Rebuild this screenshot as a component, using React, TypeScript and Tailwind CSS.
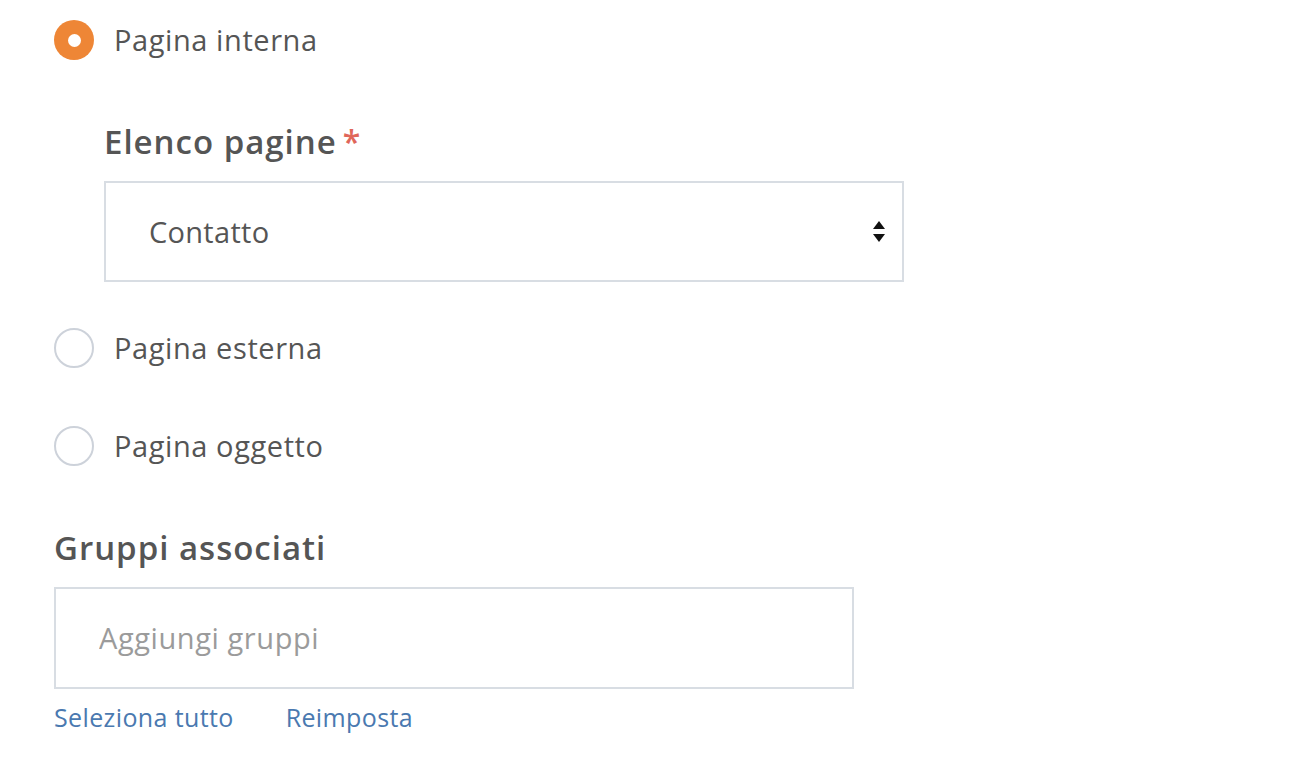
import React, { useState } from "react";

const OPTIONS = ["Pagina interna", "Pagina esterna", "Pagina oggetto"];

function Radio({ checked, label, onClick }: {
    checked: boolean;
    label: string;
    onClick: () => void;
}) {
    return (
        <div className="flex items-center h-[40px] cursor-pointer" onClick={onClick}>
            {checked
                ? <div className="w-[40px] h-[40px] rounded-full bg-[#ee8636] flex items-center justify-center">
                    <div className="w-[13px] h-[13px] rounded-full bg-white" />
                </div>
                : <div className="w-[40px] h-[40px] rounded-full border-2 border-[#cdd2da] bg-white" />
            }
            <span className="ml-[20px] text-[29px] leading-[40px] tracking-[0.02em] text-[#555555]">{label}</span>
        </div>
    )
}

export default function App() {
    const [selected, setSelected] = useState(0);

    return (
        <div className="min-h-screen bg-white pl-[54px] pt-[20px] font-['Open_Sans',sans-serif]">
            <Radio checked={selected === 0} label={OPTIONS[0]} onClick={() => setSelected(0)} />
            {selected === 0 &&
                <div className="pl-[50px] pt-[62px]">
                    <div className="flex items-start text-[33px] font-semibold tracking-[0.03em] text-[#555555] leading-[40px]">
                        Elenco pagine
                        <span className="ml-[6px] text-[32px] text-[#e0665a] leading-[40px]">*</span>
                    </div>
                    <div className="mt-[19px] w-[800px] h-[101px] border-2 border-[#d8dde3] flex items-center justify-between pl-[43px] pr-[16px]">
                        <span className="text-[29px] tracking-[0.01em] text-[#555555]">Contatto</span>
                        <svg width="14" height="26" viewBox="0 0 14 26">
                            <path d="M7 2 L13 10 L1 10 Z" fill="#111" />
                            <path d="M1 15 L13 15 L7 23 Z" fill="#111" />
                        </svg>
                    </div>
                </div>
            }
            <div className="mt-[46px]">
                <Radio checked={selected === 1} label={OPTIONS[1]} onClick={() => setSelected(1)} />
            </div>
            <div className="mt-[58px]">
                <Radio checked={selected === 2} label={OPTIONS[2]} onClick={() => setSelected(2)} />
            </div>
            <div className="mt-[62px] text-[33px] font-semibold tracking-[0.03em] text-[#555555] leading-[40px]">
                Gruppi associati
            </div>
            <div className="mt-[19px] w-[800px] h-[102px] border-2 border-[#d8dde3] flex items-center pl-[43px]">
                <input
                    placeholder="Aggiungi gruppi"
                    className="w-full outline-none text-[29px] tracking-[0.02em] text-[#555555] placeholder:text-[#9b9b9b] bg-transparent"
                />
            </div>
            <div className="mt-[10px] flex gap-[52px] text-[25px] tracking-[0.015em] text-[#4a79b0]">
                <span className="cursor-pointer">Seleziona tutto</span>
                <span className="cursor-pointer">Reimposta</span>
            </div>
        </div>
    )
}
